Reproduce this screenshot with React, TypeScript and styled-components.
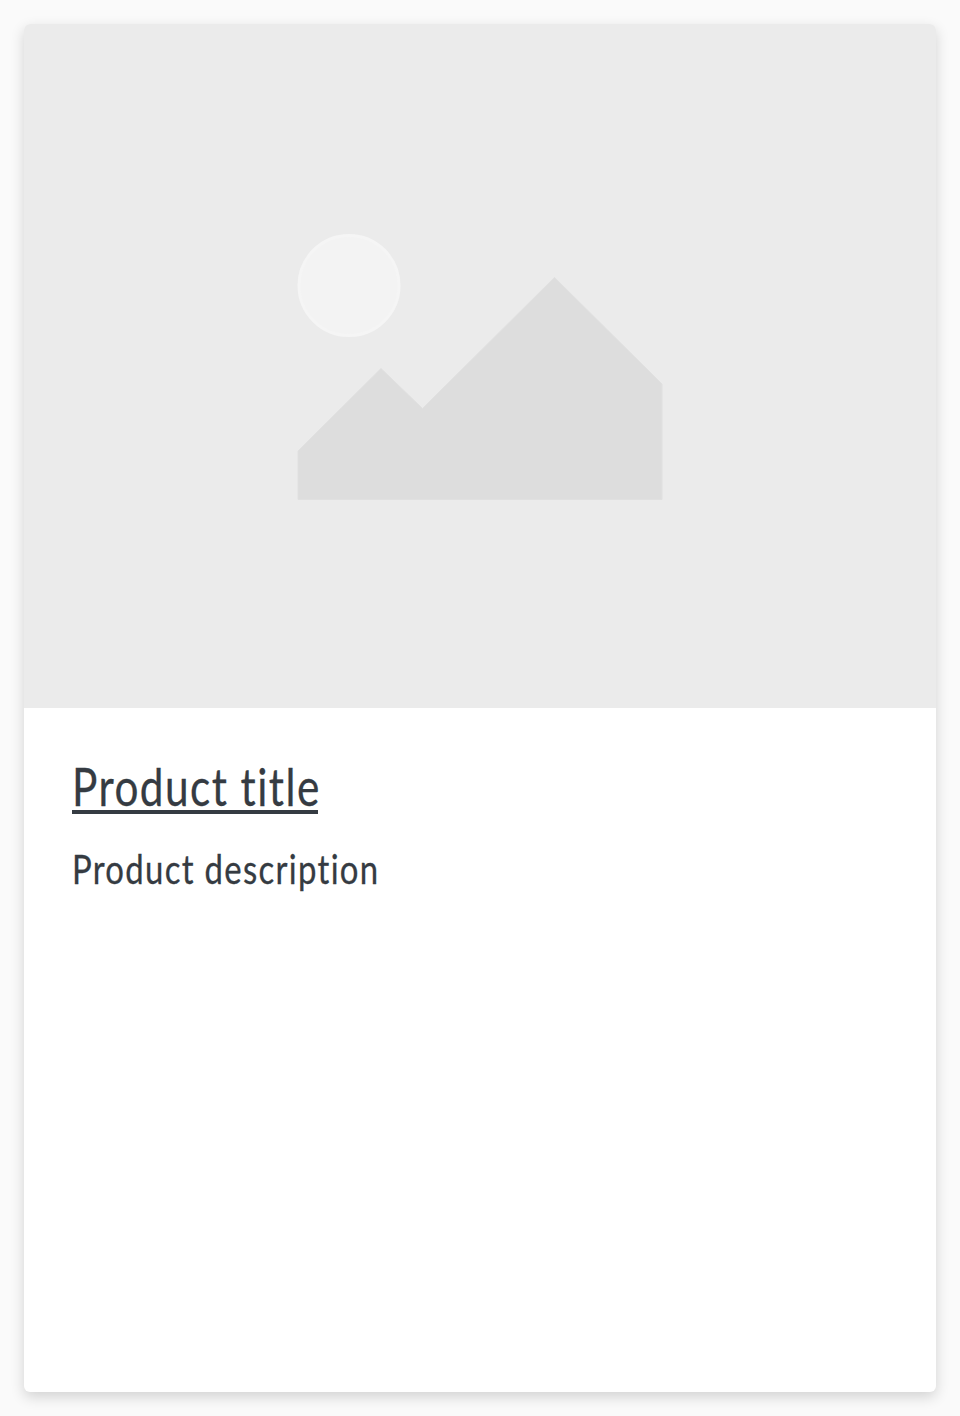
import React from "react";
import styled, { createGlobalStyle } from "styled-components";

const GlobalStyle = createGlobalStyle`
  *, *::before, *::after { box-sizing: border-box; }
  body { margin: 0; background: #fafafa; }
`;

const Page = styled.main`
  min-height: 1416px;
  padding: 24px;
  display: flex;
  background: #fafafa;
  font-family: Lato, "Open Sans", sans-serif;
  color: #353b42;
`;

const Card = styled.article`
  flex: 1;
  display: flex;
  flex-direction: column;
  background: #fff;
  border-radius: 6px;
  overflow: hidden;
  box-shadow: 0 5px 14px rgba(0, 0, 0, 0.16);
`;

const Media = styled.div`
  height: 684px;
  display: flex;
  background: #ebebeb;
`;

const Illustration = styled.svg`
  display: block;
  width: 912px;
  height: 684px;
`;

const Body = styled.div`
  padding: 48px;
  display: flex;
  flex-direction: column;
  align-items: flex-start;
`;

const Title = styled.a`
  display: block;
  width: 246px;
  height: 58px;
  border-bottom: 4px solid currentColor;
  color: inherit;
  text-decoration: none;
  font-size: 52px;
  line-height: 60px;
`;

const Condensed = styled.span<{ $scale: number; $spacing: number }>`
  display: inline-block;
  transform: scaleX(${(p) => p.$scale});
  transform-origin: 0 50%;
  letter-spacing: ${(p) => p.$spacing}px;
  -webkit-text-stroke: 0.3px currentColor;
  white-space: nowrap;
`;

const Description = styled.p`
  margin: 30px 0 0;
  font-size: 40px;
  line-height: 50px;
`;

export default function App() {
  return (
    <>
      <GlobalStyle />
      <Page>
        <Card>
          <Media>
            <Illustration viewBox="0 0 912 684" role="img" aria-label="Product">
              <circle cx="325" cy="261.5" r="50" fill="#f3f3f3" stroke="#f5f5f5" strokeWidth="3" />
              <path d="M274 427L357 344.500L398.500 384.500L530.500 253.500L638 360V475.500H274Z" fill="#ddd" stroke="#e0e0e0" strokeWidth="1" />
            </Illustration>
          </Media>
          <Body>
            <Title href="#">
              <Condensed $scale={0.813} $spacing={1.8}>Product title</Condensed>
            </Title>
            <Description>
              <Condensed $scale={0.822} $spacing={1.6}>Product description</Condensed>
            </Description>
          </Body>
        </Card>
      </Page>
    </>
  );
}
